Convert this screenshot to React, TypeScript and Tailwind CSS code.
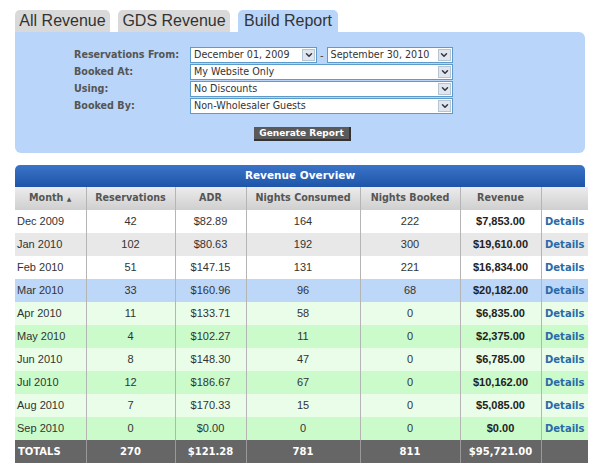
import { ChevronDown } from "lucide-react";

type Row = {
  month: string;
  res: string;
  adr: string;
  consumed: string;
  booked: string;
  revenue: string;
  bg: string;
};

const rows: Row[] = [
  { month: "Dec 2009", res: "42", adr: "$82.89", consumed: "164", booked: "222", revenue: "$7,853.00", bg: "bg-white" },
  { month: "Jan 2010", res: "102", adr: "$80.63", consumed: "192", booked: "300", revenue: "$19,610.00", bg: "bg-[#e8e8e8]" },
  { month: "Feb 2010", res: "51", adr: "$147.15", consumed: "131", booked: "221", revenue: "$16,834.00", bg: "bg-white" },
  { month: "Mar 2010", res: "33", adr: "$160.96", consumed: "96", booked: "68", revenue: "$20,182.00", bg: "bg-[#bdd7f9]" },
  { month: "Apr 2010", res: "11", adr: "$133.71", consumed: "58", booked: "0", revenue: "$6,835.00", bg: "bg-[#e9fde9]" },
  { month: "May 2010", res: "4", adr: "$102.27", consumed: "11", booked: "0", revenue: "$2,375.00", bg: "bg-[#cbfbcb]" },
  { month: "Jun 2010", res: "8", adr: "$148.30", consumed: "47", booked: "0", revenue: "$6,785.00", bg: "bg-[#e9fde9]" },
  { month: "Jul 2010", res: "12", adr: "$186.67", consumed: "67", booked: "0", revenue: "$10,162.00", bg: "bg-[#cbfbcb]" },
  { month: "Aug 2010", res: "7", adr: "$170.33", consumed: "15", booked: "0", revenue: "$5,085.00", bg: "bg-[#e9fde9]" },
  { month: "Sep 2010", res: "0", adr: "$0.00", consumed: "0", booked: "0", revenue: "$0.00", bg: "bg-[#cbfbcb]" },
];

const verdana = "font-['DejaVu_Sans',Verdana,sans-serif]";
const arial = "font-['Liberation_Sans',Arial,sans-serif]";

const Select = ({ value, width }: { value: string; width: string }) => (
  <div className={`flex h-[16px] items-center border border-[#5d9bcb] bg-white ${width}`}>
    <span className={`flex-1 truncate pl-[3px] text-[9.6px] leading-none text-[#333] ${verdana}`}>{value}</span>
    <span className="mr-px flex h-[12px] w-[13px] items-center justify-center border border-[#b7c4d4] bg-[#dfe6ee]">
      <ChevronDown size={10} strokeWidth={3.5} className="text-[#334]" />
    </span>
  </div>
);

const labelCls = `text-[9.6px] font-bold leading-none text-[#555] ${verdana}`;
const cell = "border-r border-[#b5b5b5]";

export default function App() {
  return (
    <div className="h-[471px] w-[600px] bg-white pt-[10px]">
      {/* tabs */}
      <div className={`ml-[15px] flex items-end gap-[8px] ${arial}`}>
        <div className="flex h-[22px] w-[95px] items-center justify-center rounded-t-[5px] bg-[#d9d9d9] text-[16px] text-[#333]">
          All Revenue
        </div>
        <div className="flex h-[22px] w-[112px] items-center justify-center rounded-t-[5px] bg-[#d9d9d9] text-[16px] text-[#333]">
          GDS Revenue
        </div>
        <div className="flex h-[22px] w-[100px] items-center justify-center rounded-t-[5px] bg-[#b9d5f9] text-[16px] text-[#333]">
          Build Report
        </div>
      </div>

      {/* form panel */}
      <div className="mx-[15px] h-[121px] rounded-b-[6px] rounded-tr-[6px] bg-[#b9d5f9] pl-[59px] pt-[15px]">
        <div className="grid grid-cols-[116px_auto] items-center gap-y-px">
          <span className={labelCls}>Reservations From:</span>
          <div className="flex items-center">
            <Select value="December 01, 2009" width="w-[127px]" />
            <span className={`mx-[3px] text-[10px] text-[#444] ${verdana}`}>-</span>
            <Select value="September 30, 2010" width="w-[126px]" />
          </div>
          <span className={labelCls}>Booked At:</span>
          <Select value="My Website Only" width="w-[263px]" />
          <span className={labelCls}>Using:</span>
          <Select value="No Discounts" width="w-[263px]" />
          <span className={labelCls}>Booked By:</span>
          <Select value="Non-Wholesaler Guests" width="w-[263px]" />
        </div>
        <div className="mt-[13px] flex pl-[180px]">
          <button
            className={`h-[14px] w-[97px] border-r-[2px] border-b-[2px] border-[#333] bg-[#5a5a5a] text-[9px] font-bold leading-none text-white ${verdana}`}
          >
            Generate Report
          </button>
        </div>
      </div>

      {/* revenue table */}
      <div className="mx-[15px] mt-[12px]">
        <div
          className={`flex h-[22px] items-center justify-center rounded-t-[5px] bg-gradient-to-b from-[#3a74c8] to-[#1e55a8] text-[10.5px] font-bold text-white ${verdana}`}
        >
          Revenue Overview
        </div>
        <table className="w-full table-fixed border-collapse">
          <colgroup>
            <col className="w-[71px]" />
            <col className="w-[89px]" />
            <col className="w-[71px]" />
            <col className="w-[114px]" />
            <col className="w-[100px]" />
            <col className="w-[81px]" />
            <col className="w-[47px]" />
          </colgroup>
          <thead>
            <tr className={`h-[23px] bg-gradient-to-b from-[#ececec] to-[#cfcfcf] text-[9.6px] font-bold text-[#555] ${verdana}`}>
              <th className={`${cell} font-bold`}>
                Month <span className="text-[6px]">▲</span>
              </th>
              <th className={`${cell} font-bold`}>Reservations</th>
              <th className={`${cell} font-bold`}>ADR</th>
              <th className={`${cell} font-bold`}>Nights Consumed</th>
              <th className={`${cell} font-bold`}>Nights Booked</th>
              <th className={`${cell} font-bold`}>Revenue</th>
              <th className="font-bold"></th>
            </tr>
          </thead>
          <tbody className={`text-[11px] text-[#333] ${arial}`}>
            {rows.map((r) => (
              <tr key={r.month} className={`h-[23px] ${r.bg}`}>
                <td className={`${cell} pl-[2px]`}>{r.month}</td>
                <td className={`${cell} text-center`}>{r.res}</td>
                <td className={`${cell} text-center`}>{r.adr}</td>
                <td className={`${cell} text-center`}>{r.consumed}</td>
                <td className={`${cell} text-center`}>{r.booked}</td>
                <td className={`${cell} text-center font-bold text-[#222]`}>{r.revenue}</td>
                <td className={`text-center text-[10px] font-bold text-[#2a6aa8] ${verdana}`}>Details</td>
              </tr>
            ))}
            <tr className={`h-[23px] bg-[#666] text-[10px] font-bold text-white ${verdana}`}>
              <td className="border-r border-[#999] pl-[3px]">TOTALS</td>
              <td className="border-r border-[#999] text-center">270</td>
              <td className="border-r border-[#999] text-center">$121.28</td>
              <td className="border-r border-[#999] text-center">781</td>
              <td className="border-r border-[#999] text-center">811</td>
              <td className="border-r border-[#999] text-center">$95,721.00</td>
              <td></td>
            </tr>
          </tbody>
        </table>
      </div>
    </div>
  );
}
